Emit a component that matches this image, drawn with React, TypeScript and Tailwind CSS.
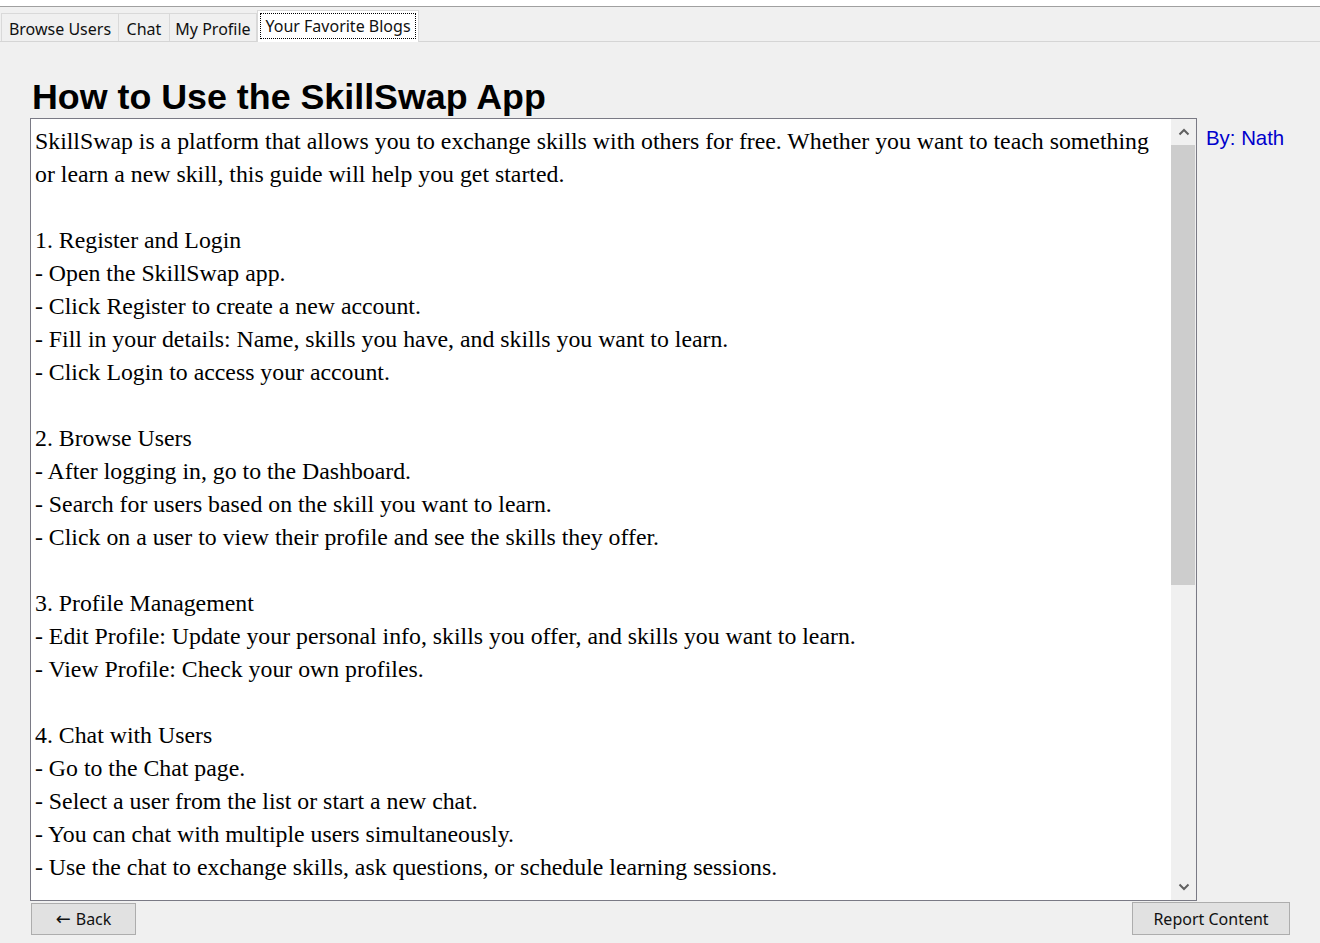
import React from "react";

const lines: string[] = [
  "SkillSwap is a platform that allows you to exchange skills with others for free. Whether you want to teach something",
  "or learn a new skill, this guide will help you get started.",
  "",
  "1. Register and Login",
  "- Open the SkillSwap app.",
  "- Click Register to create a new account.",
  "- Fill in your details: Name, skills you have, and skills you want to learn.",
  "- Click Login to access your account.",
  "",
  "2. Browse Users",
  "- After logging in, go to the Dashboard.",
  "- Search for users based on the skill you want to learn.",
  "- Click on a user to view their profile and see the skills they offer.",
  "",
  "3. Profile Management",
  "- Edit Profile: Update your personal info, skills you offer, and skills you want to learn.",
  "- View Profile: Check your own profiles.",
  "",
  "4. Chat with Users",
  "- Go to the Chat page.",
  "- Select a user from the list or start a new chat.",
  "- You can chat with multiple users simultaneously.",
  "- Use the chat to exchange skills, ask questions, or schedule learning sessions.",
  "",
  "",
  "",
];

const ui = { fontFamily: '"Noto Sans", "Open Sans", sans-serif' };

export default function App() {
  return (
    <div className="w-[1320px] h-[943px] bg-[#f0f0f0] flex flex-col overflow-hidden">
      {/* top strip */}
      <div className="h-[7px] bg-white border-b border-[#a0a0a0] shrink-0" />
      {/* tab bar */}
      <div
        className="h-[35px] shrink-0 flex items-end pl-[1px] border-b border-[#d5d5d5] text-[16px] text-[#111]"
        style={ui}
      >
        <div className="w-[118px] h-[28px] border border-b-0 border-[#d9d9d9] bg-[#f0f0f0] flex items-center justify-center pt-[2px]">
          Browse Users
        </div>
        <div className="w-[51px] h-[28px] border border-b-0 border-l-0 border-[#d9d9d9] bg-[#f0f0f0] flex items-center justify-center pt-[2px]">
          Chat
        </div>
        <div className="w-[87px] h-[28px] border border-b-0 border-l-0 border-[#d9d9d9] bg-[#f0f0f0] flex items-center justify-center pt-[2px]">
          My Profile
        </div>
        <div className="w-[162px] h-[32px] -mb-[1px] border border-b-0 border-[#d9d9d9] bg-white flex items-center justify-center p-[2px] pb-[3px]">
          <div className="w-full h-full border border-dotted border-black flex items-center justify-center pb-[1px]">
            Your Favorite Blogs
          </div>
        </div>
      </div>

      {/* content */}
      <div className="flex-1 flex flex-col px-[30px] pt-[35px]">
        <h1
          className="ml-[2px] text-[35.8px] leading-[40px] font-bold text-black"
          style={{ fontFamily: '"Liberation Sans", Arial, sans-serif' }}
        >
          How to Use the SkillSwap App
        </h1>
        <div className="mt-[1px] flex">
          <div className="w-[1167px] h-[783px] border border-[#7a7a85] bg-white flex">
            <div
              className="flex-1 overflow-hidden pl-[4px] pt-[6px] text-[23.8px] leading-[33px] text-black whitespace-pre"
              style={{ fontFamily: '"Liberation Serif", "Times New Roman", serif' }}
            >
              {lines.map((l, i) => (
                <div key={i} className="h-[33px]">
                  {l}
                </div>
              ))}
            </div>
            <div className="w-[25px] bg-[#f0f0f0] flex flex-col">
              <div className="h-[26px] flex items-center justify-center">
                <svg width="12" height="8" viewBox="0 0 12 8">
                  <polyline points="1.5,6.5 6,2 10.5,6.5" fill="none" stroke="#606060" strokeWidth="2" />
                </svg>
              </div>
              <div className="h-[440px] bg-[#cdcdcd] mr-[1px]" />
              <div className="flex-1" />
              <div className="h-[26px] flex items-center justify-center">
                <svg width="12" height="8" viewBox="0 0 12 8">
                  <polyline points="1.5,1.5 6,6 10.5,1.5" fill="none" stroke="#606060" strokeWidth="2" />
                </svg>
              </div>
            </div>
          </div>
          <div
            className="pl-[9px] pt-[9px] text-[20.4px] leading-[23px] text-[#0000cc]"
            style={{ fontFamily: '"Liberation Sans", Arial, sans-serif' }}
          >
            By: Nath
          </div>
        </div>
        <div className="mt-[1px] flex justify-between text-[16px] text-[#111]" style={ui}>
          <button className="ml-[1px] mt-[1px] w-[105px] h-[32px] bg-[#e1e1e1] border border-[#adadad] flex items-center justify-center gap-[5px]">
            <span className="text-[18px] leading-none" style={{ fontFamily: '"DejaVu Sans", sans-serif' }}>←</span>
            <span>Back</span>
          </button>
          <button className="ml-[1px] w-[158px] h-[33px] bg-[#e1e1e1] border border-[#adadad] flex items-center justify-center">
            Report Content
          </button>
        </div>
      </div>
    </div>
  );
}
